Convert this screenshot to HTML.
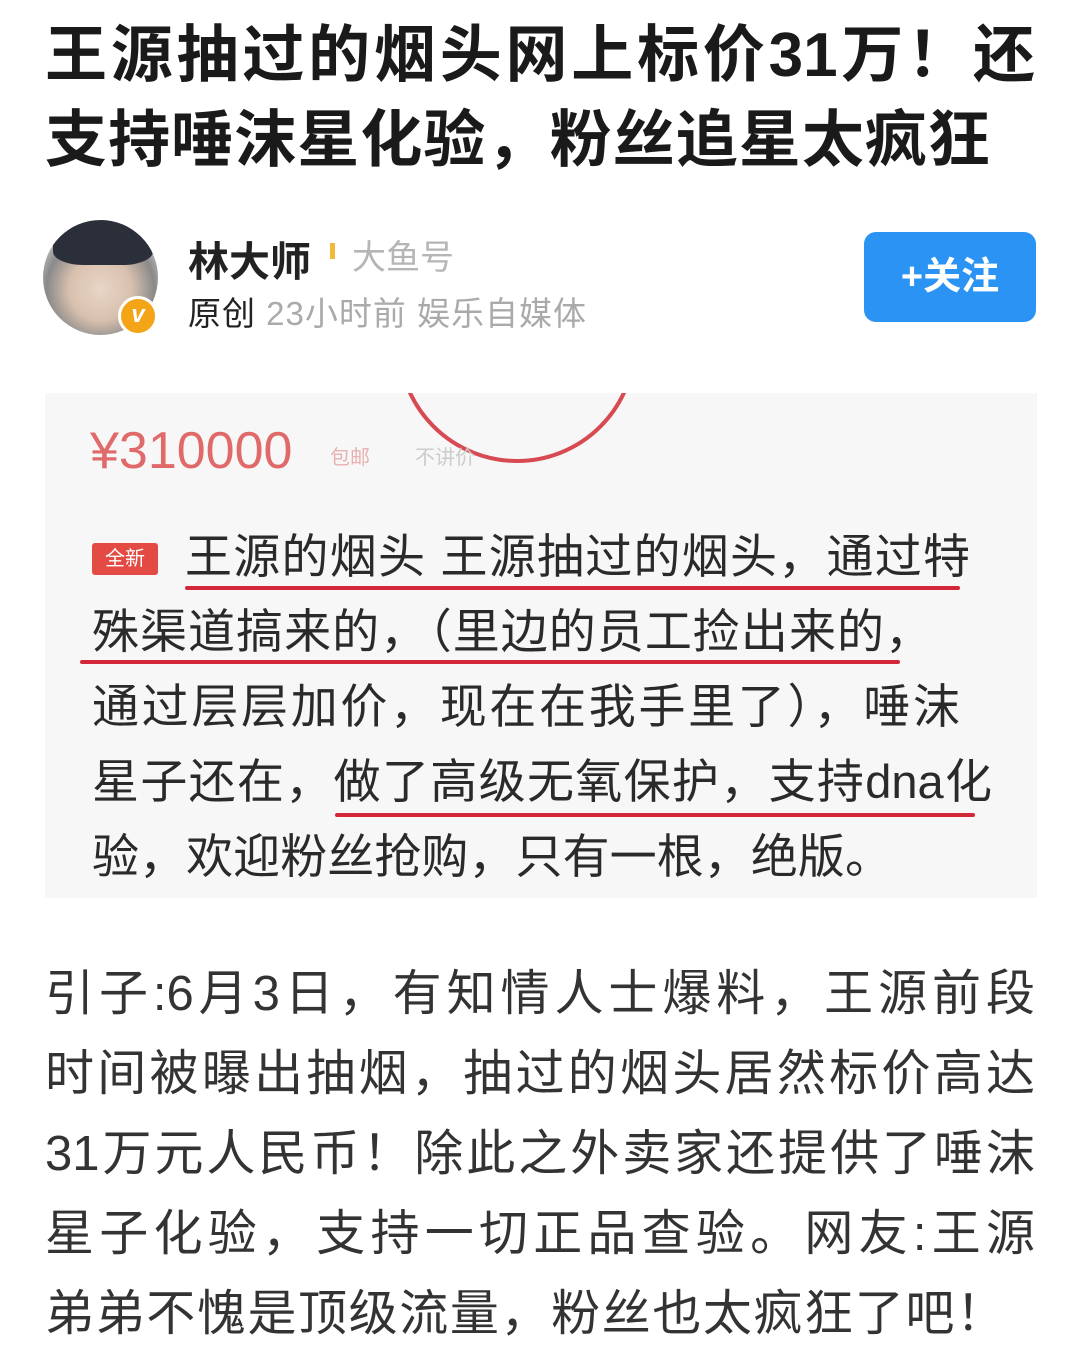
<!DOCTYPE html>
<html><head><meta charset="utf-8"><style>
*{margin:0;padding:0;box-sizing:border-box}
body{width:1077px;height:1372px;background:#fff;position:relative;overflow:hidden;font-family:"Liberation Sans","Noto Sans CJK SC",sans-serif;color:#222}
.a{position:absolute;white-space:nowrap}
.j{white-space:normal;text-align:justify;text-align-last:justify;overflow:hidden;height:auto}
.t{font-size:62px;font-weight:bold;left:45px;color:#1a1a1a;line-height:1.1}
.img{position:absolute;left:45px;top:393px;width:992px;height:505px;background:#f8f7f7;overflow:hidden}
.il{position:absolute;font-size:47px;color:#2a2a2a;line-height:1.1;text-align:justify;text-align-last:justify}
.ul{position:absolute;height:4px;background:#d3283a;border-radius:2px}
.b{font-size:49px;left:45px;width:990px;color:#333;line-height:1.1}
</style></head><body>
<div class="a t j" style="top:22px;width:990px">王源抽过的烟头网上标价31万！还</div>
<div class="a t j" style="top:107px;width:945px">支持唾沫星化验，粉丝追星太疯狂</div>

<div class="a" style="left:43px;top:220px;width:115px;height:115px;border-radius:50%;background:radial-gradient(circle at 50% 60%,#e9d6c6 0%,#d8c0ae 35%,#8a8a8a 60%,#cfcfcf 80%);overflow:hidden">
<div style="position:absolute;left:10px;top:0;width:100px;height:45px;background:#2b2f3a;border-radius:50% 50% 30% 30%"></div>
</div>
<div class="a" style="left:118px;top:296px;width:40px;height:40px;border-radius:50%;background:#f3a517;border:3px solid #fff;color:#fff;font-weight:bold;font-size:24px;text-align:center;line-height:32px;font-style:italic">v</div>

<div class="a" style="left:188px;top:228px;font-size:41px;font-weight:bold;color:#222">林大师</div>
<div class="a" style="left:330px;top:243px;width:5px;height:16px;background:#f0b93a"></div>
<div class="a" style="left:352px;top:230px;font-size:34px;color:#b5b5b5">大鱼号</div>
<div class="a" style="left:188px;top:287px;font-size:33px;color:#222;letter-spacing:1px">原创 <span style="color:#aaa">23小时前 娱乐自媒体</span></div>

<div class="a" style="left:864px;top:232px;width:172px;height:90px;background:#2b93f3;border-radius:12px;color:#fff;font-size:38px;font-weight:bold;text-align:center;line-height:90px">+关注</div>

<div class="img">
<div style="position:absolute;left:352px;top:-170px;width:240px;height:240px;border-radius:50%;border:4px solid #d84a52"></div>
<div class="a" style="left:45px;top:28px;font-size:52px;color:#e06a6a">¥310000</div>
<div class="a" style="left:285px;top:48px;font-size:20px;color:#e8b0b0">包邮</div>
<div class="a" style="left:370px;top:48px;font-size:20px;color:#ccc">不讲价</div>
<div style="position:absolute;left:47px;top:150px;width:66px;height:32px;background:#e24a43;border-radius:3px;color:#fff;font-size:20px;text-align:center;line-height:32px">全新</div>
<div class="il" style="left:140px;top:138px;width:785px">王源的烟头 王源抽过的烟头，通过特</div>
<div class="il" style="left:47px;top:213px;width:840px">殊渠道搞来的，（里边的员工捡出来的，</div>
<div class="il" style="left:47px;top:288px;width:868px">通过层层加价，现在在我手里了），唾沫</div>
<div class="il" style="left:47px;top:363px;width:900px">星子还在，做了高级无氧保护，支持dna化</div>
<div class="il" style="left:47px;top:438px;width:800px">验，欢迎粉丝抢购，只有一根，绝版。</div>
<div class="ul" style="left:140px;top:193px;width:775px"></div>
<div class="ul" style="left:35px;top:267px;width:820px"></div>
<div class="ul" style="left:290px;top:420px;width:640px"></div>
</div>

<div class="a b j" style="top:968px">引子:6月3日，有知情人士爆料，王源前段</div>
<div class="a b j" style="top:1048px">时间被曝出抽烟，抽过的烟头居然标价高达</div>
<div class="a b j" style="top:1128px">31万元人民币！除此之外卖家还提供了唾沫</div>
<div class="a b j" style="top:1208px">星子化验，支持一切正品查验。网友:王源</div>
<div class="a b j" style="top:1288px;width:960px">弟弟不愧是顶级流量，粉丝也太疯狂了吧！</div>
</body></html>
